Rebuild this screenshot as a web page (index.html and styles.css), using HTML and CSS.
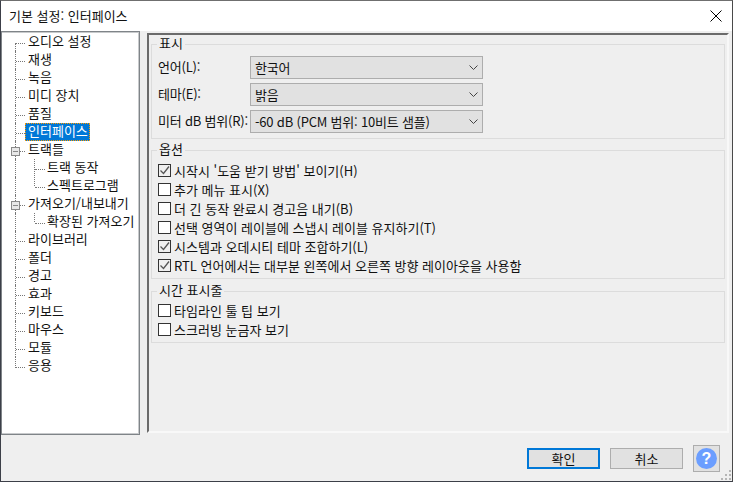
FILE: index.html
```html
<!DOCTYPE html>
<html lang="ko">
<head>
<meta charset="utf-8">
<title>기본 설정: 인터페이스</title>
<link rel="stylesheet" href="styles.css">
</head>
<body>
<div class="dialog">
  <header class="titlebar">
    <span class="title">기본 설정: 인터페이스</span>
    <svg class="close" width="12" height="12" viewBox="0 0 12 12"><path d="M.5.5l11 11M11.5.5l-11 11" stroke="#000" stroke-width="1" fill="none"/></svg>
  </header>
  <div class="main">
    <nav class="tree">
      <div class="node first">오디오 설정</div>
      <div class="node">재생</div>
      <div class="node">녹음</div>
      <div class="node">미디 장치</div>
      <div class="node">품질</div>
      <div class="node"><span class="selected">인터페이스</span></div>
      <div class="node open"><i class="toggle"></i>트랙들</div>
      <div class="node child">트랙 동작</div>
      <div class="node child lastchild">스펙트로그램</div>
      <div class="node open"><i class="toggle"></i>가져오기/내보내기</div>
      <div class="node child lastchild">확장된 가져오기</div>
      <div class="node">라이브러리</div>
      <div class="node">폴더</div>
      <div class="node">경고</div>
      <div class="node">효과</div>
      <div class="node">키보드</div>
      <div class="node">마우스</div>
      <div class="node">모듈</div>
      <div class="node last">응용</div>
    </nav>
    <section class="panel">
      <fieldset class="group g1">
        <legend>표시</legend>
        <div class="field"><label>언어(L):</label><div class="select"><span>한국어</span><svg width="9" height="5" viewBox="0 0 9 5"><path d="M.5.5l4 4 4-4" stroke="#444" fill="none"/></svg></div></div>
        <div class="field"><label>테마(E):</label><div class="select"><span>밝음</span><svg width="9" height="5" viewBox="0 0 9 5"><path d="M.5.5l4 4 4-4" stroke="#444" fill="none"/></svg></div></div>
        <div class="field"><label>미터 dB 범위(R):</label><div class="select"><span>-60 dB (PCM 범위: 10비트 샘플)</span><svg width="9" height="5" viewBox="0 0 9 5"><path d="M.5.5l4 4 4-4" stroke="#444" fill="none"/></svg></div></div>
      </fieldset>
      <fieldset class="group g2">
        <legend>옵션</legend>
        <div class="check"><i class="box on"><svg width="11" height="11" viewBox="0 0 11 11"><path d="M1.5 5.5l3 3 5.500-7" stroke="#555" stroke-width="1.300" fill="none"/></svg></i>시작시 '도움 받기 방법' 보이기(H)</div>
        <div class="check"><i class="box"></i>추가 메뉴 표시(X)</div>
        <div class="check"><i class="box"></i>더 긴 동작 완료시 경고음 내기(B)</div>
        <div class="check"><i class="box"></i>선택 영역이 레이블에 스냅시 레이블 유지하기(T)</div>
        <div class="check"><i class="box on"><svg width="11" height="11" viewBox="0 0 11 11"><path d="M1.5 5.5l3 3 5.500-7" stroke="#555" stroke-width="1.300" fill="none"/></svg></i>시스템과 오데시티 테마 조합하기(L)</div>
        <div class="check"><i class="box on"><svg width="11" height="11" viewBox="0 0 11 11"><path d="M1.5 5.5l3 3 5.500-7" stroke="#555" stroke-width="1.300" fill="none"/></svg></i>RTL 언어에서는 대부분 왼쪽에서 오른쪽 방향 레이아웃을 사용함</div>
      </fieldset>
      <fieldset class="group g3">
        <legend>시간 표시줄</legend>
        <div class="check"><i class="box"></i>타임라인 툴 팁 보기</div>
        <div class="check"><i class="box"></i>스크러빙 눈금자 보기</div>
      </fieldset>
    </section>
  </div>
  <footer class="footer">
    <button class="btn default">확인</button>
    <button class="btn">취소</button>
    <button class="help"><span class="helpdot">?</span></button>
    <svg class="grip" width="11" height="11" viewBox="0 0 11 11"><path fill="#b5b5b5" d="M8 0h2v2H8zM4 4h2v2H4zM8 4h2v2H8zM0 8h2v2H0zM4 8h2v2H4zM8 8h2v2H8z"/></svg>
  </footer>
</div>
</body>
</html>
```
FILE: styles.css
```css
* { box-sizing: border-box; }
html, body { margin: 0; padding: 0; }
body {
  width: 733px; height: 482px; overflow: hidden;
  font: 13px/18px "Noto Sans CJK KR", "Liberation Sans", sans-serif;
  color: #111;
}
.dialog {
  width: 733px; height: 482px;
  display: flex; flex-direction: column;
  background: #efefef;
  border: 1px solid #3c3f48;
  border-top-color: #6f6f6f;
  border-right-color: #4a4a4a;
}
.titlebar {
  height: 30px; flex: none;
  background: #fff;
  display: flex; align-items: center; justify-content: space-between;
  padding: 0 10px 0 8px;
}
.main { flex: none; height: 404px; display: flex; }
.tree {
  width: 139px; height: 404px;
  background: #fff;
  border: 1px solid #7f8488;
  box-shadow: inset -1px -1px 0 #c8cacc, inset 0 1px 0 #c8cacc;
  padding-top: 1px;
  margin-right: 7px;
}
.node {
  position: relative;
  height: 18px; line-height: 16px;
  padding-left: 26px;
  white-space: nowrap;
}
.node::before {
  content: ""; position: absolute;
  left: 13px; top: 0; bottom: 0;
  border-left: 1px dotted #777;
}
.node::after {
  content: ""; position: absolute;
  left: 14px; top: 10px; width: 9px;
  border-top: 1px dotted #777;
}
.node.first::before { top: 10px; }
.node.last::before { bottom: 7px; }
.child { padding-left: 45px; background: repeating-linear-gradient(#777 0 1px, transparent 1px 2px) 32px 0/1px 100% no-repeat; }
.child::after { left: 33px; width: 10px; }
.lastchild { background-size: 1px 10px; }
.selected {
  display: inline-block;
  background: #0078d7; color: #fff;
  margin-left: -3px; padding: 0 2px 0 3px;
  height: 18px; line-height: 16px;
  outline: 1px dotted #ff9a00; outline-offset: -1px;
}
.toggle {
  position: absolute; left: 9px; top: 6px; z-index: 1;
  width: 9px; height: 9px;
  background: linear-gradient(#888,#888) center/5px 1px no-repeat #e8e8e8;
  border: 1px solid #8a8a8a;
}
.panel {
  flex: 1; height: 400px;
  background: #efefef;
  border: 2px solid;
  border-color: #6b6b6b #f8f8f8 #f8f8f8 #6b6b6b;
  margin-top: 2px;
  margin-right: 3px;
  padding: 0 2px;
  display: flex; flex-direction: column;
}
.group {
  margin: 0; padding: 0 6px;
  border: 1px solid #dcdcdc;
  min-width: 0;
}
.group legend { margin-left: -1px; padding: 0 2px; height: 18px; line-height: 16px; }
.g1 { height: 104px; padding-top: 3px; flex: none; }
.g2 { height: 138px; margin-top: 2px; padding-top: 2px; flex: none; }
.g3 { height: 61px; margin-top: 3px; padding-top: 1px; flex: none; }
.field { display: flex; align-items: center; height: 23px; margin-bottom: 4px; }
.field label { width: 92px; flex: none; white-space: nowrap; letter-spacing: -.2px; padding-bottom: 1px; }
.select {
  width: 233px; height: 23px;
  background: #e1e1e1; border: 1px solid #adadad;
  display: flex; align-items: center; justify-content: space-between;
  padding: 0 4px 0 4px;
  letter-spacing: -.2px;
}
.check { display: flex; align-items: center; height: 19px; white-space: nowrap; }
.box {
  width: 13px; height: 13px; flex: none;
  background: #fff; border: 1px solid #333;
  margin-right: 3px;
  display: flex;
}
.box.on { background: #efefef; }
.footer {
  flex: 1; position: relative;
  display: flex; align-items: center; justify-content: flex-end;
  gap: 10px; padding: 0 12px 0 0;
}
.btn {
  width: 73px; height: 21px; padding: 0;
  background: #e1e1e1; border: 1px solid #adadad;
  font: inherit; line-height: 17px; color: #111;
}
.btn.default { border: 2px solid #0078d7; }
.help {
  width: 27px; height: 27px; padding: 0;
  background: #e1e1e1; border: 1px solid #adadad;
  display: flex; align-items: center; justify-content: center;
}
.helpdot {
  width: 21px; height: 21px; border-radius: 50%;
  background: #6b9eff; color: #fff;
  font: bold 16px/21px "Liberation Sans", sans-serif;
  text-align: center;
}
.grip { position: absolute; right: 0; bottom: 0; }
```
